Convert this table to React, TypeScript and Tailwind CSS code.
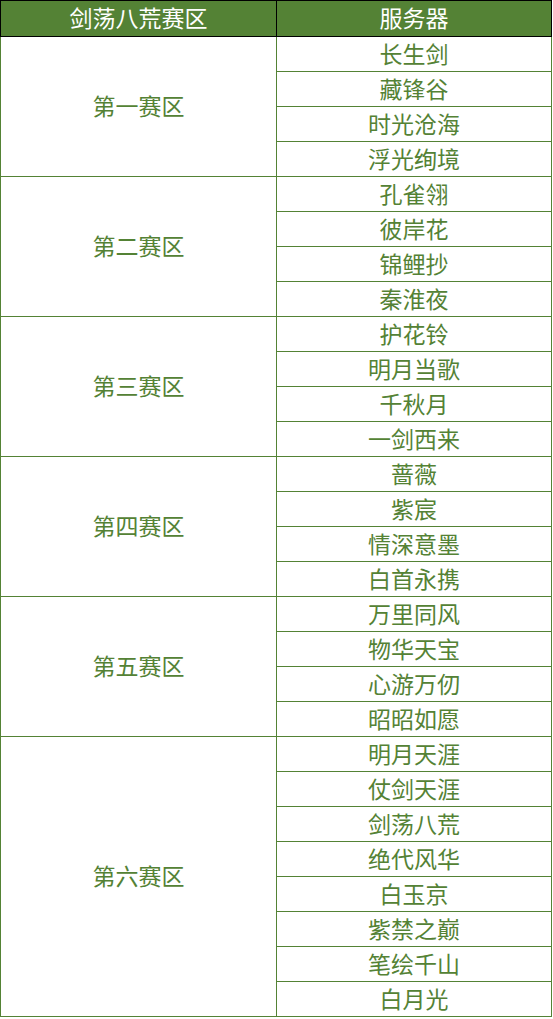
const groups: { name: string; servers: string[] }[] = [
  { name: "第一赛区", servers: ["长生剑", "藏锋谷", "时光沧海", "浮光绚境"] },
  { name: "第二赛区", servers: ["孔雀翎", "彼岸花", "锦鲤抄", "秦淮夜"] },
  { name: "第三赛区", servers: ["护花铃", "明月当歌", "千秋月", "一剑西来"] },
  { name: "第四赛区", servers: ["蔷薇", "紫宸", "情深意墨", "白首永携"] },
  { name: "第五赛区", servers: ["万里同风", "物华天宝", "心游万仞", "昭昭如愿"] },
  {
    name: "第六赛区",
    servers: ["明月天涯", "仗剑天涯", "剑荡八荒", "绝代风华", "白玉京", "紫禁之巅", "笔绘千山", "白月光"],
  },
];

export default function App() {
  return (
    <div
      className="w-[553px] bg-white"
      style={{ fontFamily: '"Microsoft YaHei", "Noto Sans CJK SC", sans-serif' }}
    >
      <table className="w-[552px] border-collapse table-fixed text-[23px] leading-none">
        <colgroup>
          <col className="w-[276px]" />
          <col />
        </colgroup>
        <thead>
          <tr className="h-[36px] bg-[#548235] text-white">
            <th className="border border-black pb-[2px] font-normal">剑荡八荒赛区</th>
            <th className="border border-black pb-[2px] font-normal">服务器</th>
          </tr>
        </thead>
        <tbody className="text-[#548235]">
          {groups.map((g) =>
            g.servers.map((s, i) => (
              <tr key={s} className="h-[35px]">
                {i === 0 && (
                  <td rowSpan={g.servers.length} className="border border-[#548235] pb-[2px] text-center">
                    {g.name}
                  </td>
                )}
                <td className="border border-[#548235] pb-[2px] text-center">{s}</td>
              </tr>
            ))
          )}
        </tbody>
      </table>
    </div>
  );
}
